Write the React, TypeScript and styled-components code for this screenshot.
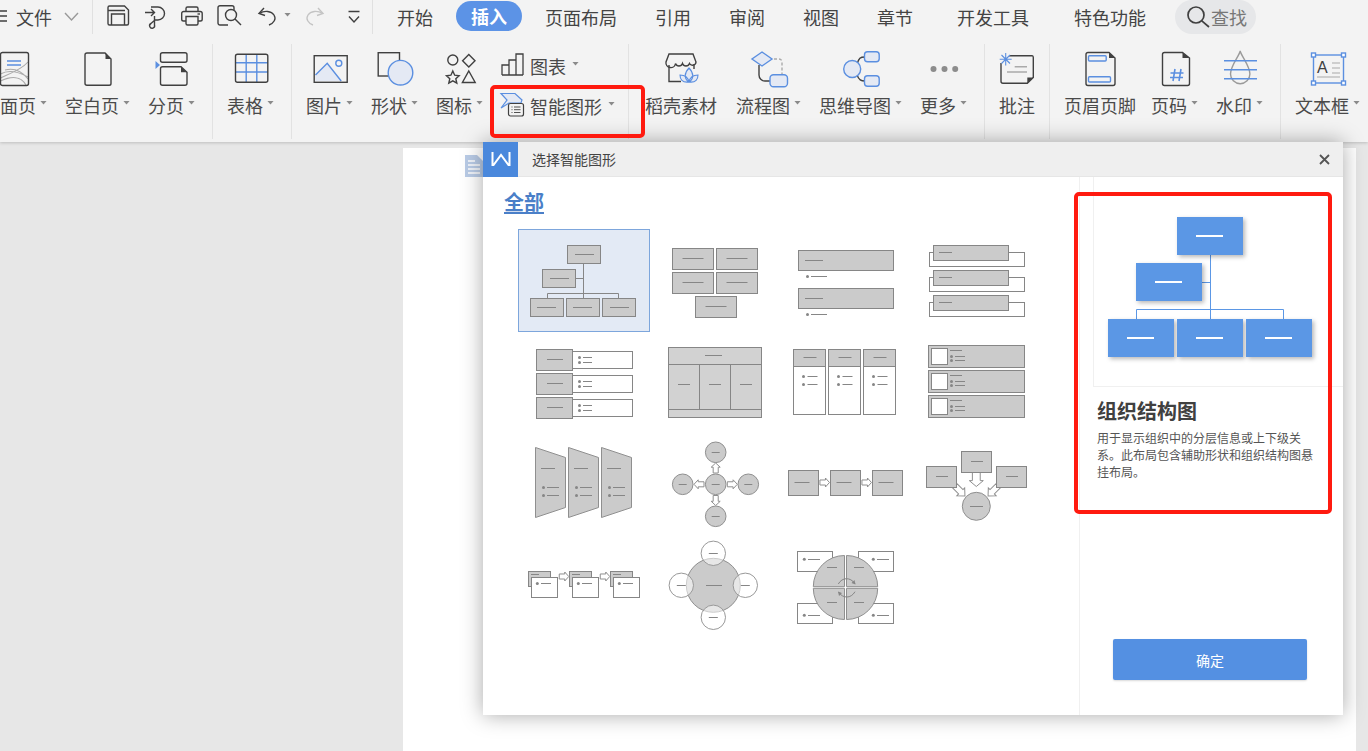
import React from "react";
import styled, { createGlobalStyle } from "styled-components";

const INK = "#404040";
const BLUE = "#5b8fe0";
const TINT = "#e4e9f4";
const GRAY = "#868686";
const FILL = "#cbcbcb";

const GlobalStyle = createGlobalStyle`
  html, body {
    margin: 0;
    padding: 0;
    overflow: hidden;
    background: #e7e7e7;
    font-family: "Noto Sans CJK SC", "Liberation Sans", sans-serif;
  }
`;

const Page = styled.div`
  position: relative;
  width: 1368px;
  height: 751px;
  overflow: hidden;
  background: #e7e7e7;
`;

const Ribbon = styled.header`
  height: 142px;
  background: #f3f3f3;
  box-shadow: 0 1px 3px rgba(0, 0, 0, 0.18);
  overflow: hidden;
`;

const QuickBar = styled.div`
  display: flex;
  align-items: center;
  height: 34px;
  color: #444;
  font-size: 18px;
`;

const QuickSlot = styled.span<{ $ml?: number; $w?: number }>`
  display: inline-flex;
  flex: none;
  width: ${(p) => p.$w ?? 24}px;
  margin-left: ${(p) => p.$ml ?? 13}px;
`;

const FileLabel = styled.span`
  margin-left: 9px;
  line-height: 24px;
`;

const BarSep = styled.span<{ $ml: number }>`
  flex: none;
  width: 1px;
  height: 34px;
  margin-left: ${(p) => p.$ml}px;
  background: #e0e0e0;
`;

const Tab = styled.span<{ $push?: number; $active?: boolean }>`
  flex: none;
  margin-left: ${(p) => p.$push ?? 8}px;
  padding: 0 15px;
  height: ${(p) => (p.$active ? 30 : 34)}px;
  line-height: ${(p) => (p.$active ? 30 : 34)}px;
  align-self: flex-start;
  margin-top: ${(p) => (p.$active ? 1 : 0)}px;
  border-radius: 15px;
  background: ${(p) => (p.$active ? "#5c93e6" : "transparent")};
  color: ${(p) => (p.$active ? "#fff" : "#444")};
  font-weight: ${(p) => (p.$active ? 700 : 400)};
`;

const SearchPill = styled.span`
  display: flex;
  flex: none;
  align-items: center;
  gap: 1px;
  width: 81px;
  height: 34px;
  margin-left: 14px;
  padding-left: 11px;
  box-sizing: border-box;
  border-radius: 17px;
  background: #e6e7e9;
  color: #777;
`;

const ToolRow = styled.div`
  display: flex;
  height: 95px;
  margin-top: 10px;
  margin-left: -18px;
`;

const Group = styled.div<{ $pl?: number; $pr?: number; $last?: boolean }>`
  display: flex;
  flex: none;
  gap: 18px;
  padding: 0 ${(p) => p.$pr ?? 17}px 0 ${(p) => p.$pl ?? 14}px;
  border-right: ${(p) => (p.$last ? "none" : "1px solid #e2e2e2")};
`;

const ToolButton = styled.div<{ $mr?: number }>`
  display: flex;
  flex: none;
  flex-direction: column;
  align-items: center;
  padding-top: 6px;
  margin-right: ${(p) => p.$mr ?? 0}px;
`;

const IconSvg = styled.svg`
  display: block;
  flex: none;
  width: 36px;
  height: 36px;
  margin-bottom: 8px;
  overflow: visible;
`;

const ToolLabel = styled.div`
  display: flex;
  align-items: center;
  height: 22px;
  color: #4a4a4a;
  font-size: 18px;
  line-height: 22px;
  white-space: nowrap;
`;

const Caret = styled.i<{ $ml?: number }>`
  flex: none;
  width: 7px;
  height: 4px;
  margin-left: ${(p) => p.$ml ?? 4}px;
  margin-bottom: 5px;
  background: #8a8a8a;
  clip-path: polygon(0 0, 100% 0, 50% 100%);
`;

const SmallColumn = styled.div`
  display: flex;
  flex-direction: column;
  gap: 16px;
  padding-top: 10px;
`;

const SmallTool = styled.div`
  display: flex;
  align-items: center;
  gap: 5px;
  height: 24px;
  color: #4a4a4a;
  font-size: 18px;
`;

const SmallIcon = styled.svg`
  flex: none;
  width: 24px;
  height: 24px;
  overflow: visible;
`;

const Workspace = styled.main`
  padding: 6px 0 0 403px;
`;

const DocSheet = styled.section`
  width: 953px;
  height: 603px;
  padding: 7px 0 0 62px;
  box-sizing: border-box;
  background: #fff;
`;

const Dialog = styled.div`
  position: absolute;
  left: 483px;
  top: 142px;
  display: flex;
  flex-direction: column;
  width: 860px;
  height: 573px;
  background: #fff;
  box-shadow: 0 0 20px rgba(0, 0, 0, 0.34);
`;

const TitleBar = styled.div`
  display: flex;
  flex: none;
  align-items: center;
  height: 35px;
  box-sizing: border-box;
  border-bottom: 1px solid #e6e6e6;
  background: #efefef;
  color: #444;
  font-size: 14px;
`;

const LogoTile = styled.div`
  display: flex;
  flex: none;
  align-items: center;
  justify-content: center;
  width: 35px;
  height: 35px;
  margin-right: 14px;
  background: #4a88dc;
`;

const CloseSlot = styled.span`
  display: flex;
  margin-left: auto;
  margin-right: 13px;
`;

const DialogBody = styled.div`
  display: flex;
  flex: 1;
  min-height: 0;
`;

const Gallery = styled.div`
  flex: none;
  width: 597px;
  padding: 14px 0 0 21px;
  box-sizing: border-box;
  border-right: 1px solid #f0f0f0;
`;

const AllHeading = styled.span`
  display: block;
  width: fit-content;
  height: 21px;
  border-bottom: 2px solid #4a7fc8;
  color: #4a7fc8;
  font-size: 20px;
  font-weight: 700;
  line-height: 21px;
`;

const TileGrid = styled.div`
  display: grid;
  grid-template-columns: repeat(4, 132px);
  grid-auto-rows: 102px;
  margin: 15px 0 0 14px;
`;

const Tile = styled.div<{ $selected?: boolean }>`
  height: 103px;
  background: ${(p) => (p.$selected ? "#e3eaf5" : "transparent")};
  outline: ${(p) => (p.$selected ? "1px solid #7da6dc" : "none")};
  outline-offset: -1px;
`;

const TileSvg = styled.svg`
  display: block;
  width: 132px;
  height: 103px;
`;

const Detail = styled.aside`
  display: flex;
  flex: 1;
  flex-direction: column;
  padding: 0 0 35px 13px;
`;

const Preview = styled.svg`
  display: block;
  flex: none;
  width: 250px;
  height: 210px;
  box-sizing: border-box;
  border-left: 1px solid #f0f0f0;
  border-bottom: 1px solid #f0f0f0;
`;

const LayoutName = styled.h2`
  margin: 10px 0 0 4px;
  color: #404040;
  font-size: 20px;
  font-weight: 700;
  line-height: 28px;
`;

const LayoutText = styled.p`
  width: 218px;
  margin: 4px 0 0 4px;
  color: #555;
  font-size: 12px;
  line-height: 17px;
`;

const ConfirmButton = styled.button`
  width: 194px;
  height: 41px;
  margin: auto 0 0 20px;
  border: none;
  border-radius: 2px;
  background: #5490e2;
  box-shadow: 0 1px 2px rgba(0, 0, 0, 0.15);
  color: #fff;
  font-family: inherit;
  font-size: 14px;
`;

const RedMark = styled.div<{ $x: number; $y: number; $w: number; $h: number }>`
  position: absolute;
  left: ${(p) => p.$x}px;
  top: ${(p) => p.$y}px;
  width: ${(p) => p.$w}px;
  height: ${(p) => p.$h}px;
  box-sizing: border-box;
  border: 4px solid #ff1a0f;
  border-radius: 5px;
  pointer-events: none;
`;

/* ---- quick access icons ---- */

const Quick = ({ children }: { children: React.ReactNode }) => (
  <svg width="24" height="24" viewBox="0 0 24 24" fill="none" stroke={INK} strokeWidth="1.4" style={{ overflow: "visible" }}>
    {children}
  </svg>
);

const SaveIcon = () => (
  <Quick>
    <path d="M3.500 1h15l4 4v13.500a1.500 1.500 0 0 1-1.500 1.500H3.500A1.500 1.500 0 0 1 2 18.500v-16A1.500 1.500 0 0 1 3.500 1z" />
    <path d="M2 5.500h17M5.500 20V9h13v11" />
  </Quick>
);
const SaveAsIcon = () => (
  <Quick>
    <path d="M2 7.500h9M8 4l3.500 3.500L8 11" />
    <path d="M8 2h7a6.500 6.500 0 0 1 0 13h-3l-4 3.500a2.500 2.500 0 1 0 3.500 1.500V11" />
  </Quick>
);
const PrintIcon = () => (
  <Quick>
    <path d="M6 6.500V3.500A1.500 1.500 0 0 1 7.500 2h9A1.500 1.500 0 0 1 18 3.500v3" />
    <path d="M6 16H3.500a1.800 1.800 0 0 1-1.800-1.800V8.500a2 2 0 0 1 2-2h16.500a2 2 0 0 1 2 2v5.700a1.800 1.800 0 0 1-1.800 1.800H18" />
    <path d="M6 11.500h12v7a1.500 1.500 0 0 1-1.500 1.500h-9A1.500 1.500 0 0 1 6 18.500z" />
    <path d="M17.500 9H20" />
  </Quick>
);
const PreviewIcon = () => (
  <Quick>
    <path d="M11 20H3a2 2 0 0 1-2-2V2.700a2 2 0 0 1 2-2h12a2 2 0 0 1 2 2V5" />
    <circle cx="14" cy="10" r="5.500" />
    <path d="M18 14l6 6" />
  </Quick>
);
const UndoIcon = () => (
  <Quick>
    <path d="M9 3L4 8.500l6 2" />
    <path d="M4.500 8.500c5-3.500 12-2.500 14.500 1.500 2.500 4 0 8-5 10" />
  </Quick>
);
const RedoIcon = () => (
  <svg width="24" height="24" viewBox="0 0 24 24" fill="none" stroke="#c4c4c4" strokeWidth="1.4">
    <path d="M15 3l5 5.500-6 2" />
    <path d="M19.500 8.500c-5-3.500-12-2.500-14.500 1.500-2.500 4 0 8 5 10" />
  </svg>
);
const MoreQuickIcon = () => (
  <Quick>
    <path d="M6.500 6.500h11M7 11.500l5 5.500 5-5.500" />
  </Quick>
);
const SearchIcon = () => (
  <svg width="24" height="24" viewBox="0 0 24 24" fill="none" stroke={INK} strokeWidth="1.7">
    <circle cx="10" cy="10" r="8" />
    <path d="M15.800 15.800L23 22" />
  </svg>
);

/* ---- ribbon icons ---- */

const Ico = ({ children }: { children: React.ReactNode }) => (
  <IconSvg viewBox="0 0 36 36" fill="none" stroke={INK} strokeWidth="1.4">
    {children}
  </IconSvg>
);
const PAGE = "M7 3h18l6 6v24.500a1.800 1.800 0 0 1-1.800 1.800H7a2 2 0 0 1-2-2V5a2 2 0 0 1 2-2z";
const Corner = () => <path d="M25.500 3l5.500 6h-5.500z" fill={INK} stroke="none" />;

const CoverIcon = () => (
  <IconSvg viewBox="0 0 36 36" fill="none" strokeWidth="1.4">
    <path d="M3.500 24C12 19 22 22 31 27M3.500 28C12 24 24 20 31 12M3.500 31C14 26 24 26 29 35M8 20c8-2 16 0 23 9" stroke="#aaa" strokeWidth="1.100" />
    <path d="M10 11h14M10 15h14" stroke={BLUE} />
    <path d="M5.500 2.500h24a2 2 0 0 1 2 2v29a2 2 0 0 1-2 2h-24a2 2 0 0 1-2-2v-29a2 2 0 0 1 2-2z" stroke={INK} />
  </IconSvg>
);
const BlankIcon = () => (
  <Ico>
    <path d={PAGE} />
    <Corner />
  </Ico>
);
const BreakIcon = () => (
  <IconSvg viewBox="0 0 36 36" fill="none" stroke={INK} strokeWidth="1.4">
    <rect x="6.500" y="2.700" width="26.500" height="9.500" rx="2" />
    <path d="M8.500 16.700H27l6 5.500v11a2 2 0 0 1-2 2H8.500a2 2 0 0 1-2-2v-14.500a2 2 0 0 1 2-2z" />
    <path d="M27 16.700l6 5.500h-6z" fill={INK} stroke="none" />
    <path d="M1.500 11l4.500 4-4.500 4z" fill={BLUE} stroke="none" />
  </IconSvg>
);
const TableIcon = () => (
  <Ico>
    <path d="M2.500 12.700h32.300M2.500 22h32.300M13.200 4.300v28M23.800 4.300v28" stroke={BLUE} />
    <rect x="2.500" y="4.300" width="32.300" height="28" rx="2" />
  </Ico>
);
const PictureIcon = () => (
  <Ico>
    <path d="M3.500 25l11.700-11.700 14 17.700H3.500z" fill={TINT} stroke="none" />
    <path d="M3.500 25l11.700-11.700 14 17.700M23.800 13.300a3 3 0 1 0 6 0 3 3 0 1 0-6 0z" stroke={BLUE} />
    <rect x="2.200" y="5.700" width="33" height="26.600" />
  </Ico>
);
const ShapeIcon = () => (
  <Ico>
    <rect x="1.200" y="2.700" width="21.300" height="23.300" />
    <circle cx="23.500" cy="22.700" r="12.300" fill={TINT} stroke={BLUE} />
  </Ico>
);
const SymbolIcon = () => (
  <Ico>
    <circle cx="10.800" cy="10" r="5" />
    <path d="M10.800 21l1.900 4.200 4.400.500-3.300 3 1 4.500-4-2.300-4 2.300 1-4.500-3.300-3 4.400-.500z" />
    <path d="M26.800 4.500l6.200 6.200-6.200 6.200-6.200-6.200z" />
    <path d="M26.800 21l6.400 11.500H20.400z" />
  </Ico>
);
const StoreIcon = () => (
  <Ico>
    <path d="M6 4h24l3 8a3.500 3.500 0 0 1-6.500 1.500 3.700 3.700 0 0 1-7 0 3.700 3.700 0 0 1-7 0A3.500 3.500 0 0 1 3 12z" />
    <path d="M6 15v16.500h12M31 14v5" />
    <path d="M26 32c-5-3-5-9 0-14 5 5 5 11 0 14zM26 32c-7 1-9-3-9-7 4 0 8 2 9 7zM26 32c7 1 9-3 9-7-4 0-8 2-9 7z" fill={TINT} stroke={BLUE} strokeWidth="1.100" />
  </Ico>
);
const FlowIcon = () => (
  <Ico>
    <path d="M18 9h10a3 3 0 0 1 3 3v12" stroke="#aaa" strokeDasharray="3 2" />
    <path d="M8 15v10a6 6 0 0 0 6 6h5" />
    <path d="M11 2l10 7-10 7L1 9z" fill={TINT} stroke={BLUE} />
    <rect x="19" y="24.700" width="17.500" height="12" rx="3.500" fill={TINT} stroke={BLUE} />
  </Ico>
);
const MindIcon = () => (
  <Ico>
    <path d="M14 14c2-6 3-7 8-7M14 25c2 5 4 6 8 6" />
    <circle cx="9.200" cy="19" r="8.500" fill={TINT} stroke={BLUE} />
    <rect x="21.500" y="1.700" width="14.700" height="10" rx="3" fill={TINT} stroke={BLUE} />
    <rect x="21.500" y="25.700" width="14.700" height="10.600" rx="3" fill={TINT} stroke={BLUE} />
  </Ico>
);
const DotsIcon = () => (
  <IconSvg viewBox="0 0 36 36" fill="#8c8c8c">
    <circle cx="7.500" cy="19" r="3" />
    <circle cx="18.500" cy="19" r="3" />
    <circle cx="29.200" cy="19" r="3" />
  </IconSvg>
);
const NoteIcon = () => (
  <Ico>
    <path d="M10 5.700h23a1.800 1.800 0 0 1 1.300 1.800v20l-6 5.800H4a2 2 0 0 1-2-2V13" />
    <path d="M34.300 27.500l-6 5.800v-5.800z" fill={INK} stroke="none" />
    <path d="M15.700 16.700H28M8 22h20" stroke="#aaa" />
    <path d="M6.700 3v12.500M.7 9.300h12M2.500 5l8.500 8.500M11 5l-8.500 8.500" stroke={BLUE} strokeWidth="1.100" />
  </Ico>
);
const HeaderIcon = () => (
  <Ico>
    <path d="M6 2.500h21l6 5.500v25.500a2 2 0 0 1-2 2H6a2 2 0 0 1-2-2V4.500a2 2 0 0 1 2-2z" />
    <path d="M27 2.500l6 5.500h-6z" fill={INK} stroke="none" />
    <rect x="6.500" y="5.700" width="17.700" height="5.300" rx="1" stroke={BLUE} />
    <rect x="6.500" y="26.700" width="22" height="5.300" rx="1" stroke={BLUE} />
  </Ico>
);
const PageNumIcon = () => (
  <Ico>
    <path d="M7.500 2.500h18l7 5.500v25.500a2 2 0 0 1-2 2h-23a2 2 0 0 1-2-2V4.500a2 2 0 0 1 2-2z" />
    <path d="M25.500 2.500l7 5.500h-7z" fill={INK} stroke="none" />
    <path d="M18 19l-2 12M24 19l-2 12M13.500 23h13M13 27.500h13" stroke={BLUE} strokeWidth="1.600" />
  </Ico>
);
const WatermarkIcon = () => (
  <Ico>
    <path d="M18.200 1c-1 5-9.700 15-9.700 23a9.700 9.700 0 0 0 19.400 0c0-8-8.700-18-9.700-23z" stroke="#9a9a9a" />
    <path d="M2 10.700h33M2 19.700h33M2 28.700h33" stroke={BLUE} />
  </Ico>
);
const TextBoxIcon = () => (
  <Ico>
    <rect x="3.500" y="5" width="30" height="28" stroke={BLUE} />
    <text x="7" y="23" fontSize="16" fill={INK} stroke="none" fontFamily="Liberation Sans, sans-serif">A</text>
    <path d="M22 13h8M22 18h8M22 23h8M7 27h23" stroke="#aaa" strokeWidth="1.100" />
    {[[3.5, 5], [33.5, 5], [3.5, 33], [33.5, 33]].map(([x, y]) => (
      <rect key={`${x}-${y}`} x={x - 2} y={y - 2} width="4" height="4" fill="#fff" stroke={BLUE} />
    ))}
  </Ico>
);

const ChartIcon = () => (
  <SmallIcon viewBox="0 0 24 24" fill="none" stroke={INK} strokeWidth="1.300">
    <path d="M1 21V11h7v10M8 21V6h7v15M15 21V0h7v21M1 21h21" />
  </SmallIcon>
);
const SmartIcon = () => (
  <SmallIcon viewBox="0 0 24 24" fill="none" strokeWidth="1.200">
    <path d="M0 -.5h14l7 6.500-1 3H8l-8 5 6-8z" fill={TINT} stroke={BLUE} />
    <rect x="7.500" y="9.500" width="15" height="12.500" rx="2" fill="#f3f3f3" stroke={INK} />
    <path d="M10.500 13h1M13 13h6.500M10.500 15.700h1M13 15.700h6.500M10.500 18.500h1M13 18.500h6.500" stroke={INK} strokeWidth=".9" />
  </SmallIcon>
);

const DocMark = () => (
  <svg width="22" height="22" viewBox="0 0 22 22" style={{ display: "block" }}>
    <path d="M0 0h12l6 6v16H0z" fill="#b9cbe6" />
    <path d="M3 6h7M3 10h12M3 14h12M3 18h12" stroke="#fff" strokeWidth="1.300" />
  </svg>
);

/* ---- gallery pieces, drawn in screenshot coordinates ---- */

const Box = ({ x, y, w, h, white, fill }: { x: number; y: number; w: number; h: number; white?: boolean; fill?: string }) => (
  <rect x={x} y={y} width={w} height={h} fill={white ? "#fff" : fill ?? FILL} stroke={GRAY} />
);
const Dash = ({ x1, x2, y }: { x1: number; x2: number; y: number }) => (
  <line x1={x1} x2={x2} y1={y} y2={y} stroke={GRAY} />
);
const Dot = ({ x, y }: { x: number; y: number }) => <circle cx={x} cy={y} r="1.500" fill={GRAY} />;
const Wire = ({ d }: { d: string }) => <path d={d} fill="none" stroke={GRAY} />;
const Disc = ({ x, y, r }: { x: number; y: number; r: number }) => (
  <circle cx={x} cy={y} r={r} fill={FILL} stroke="#8f8f8f" />
);
const Arrow = ({ x, y, len = 10, w = 9, rot = 0 }: { x: number; y: number; len?: number; w?: number; rot?: number }) => {
  const head = len * 0.42;
  const s = w * 0.28;
  const pts = [
    [-len / 2, -s], [len / 2 - head, -s], [len / 2 - head, -w / 2], [len / 2, 0],
    [len / 2 - head, w / 2], [len / 2 - head, s], [-len / 2, s],
  ].map((p) => p.join(",")).join(" ");
  return <polygon points={pts} transform={`translate(${x} ${y}) rotate(${rot})`} fill="#fff" stroke="#8f8f8f" />;
};

const orgChart = (
  <>
    <Wire d="M583.500 263v35M575.500 278.500h8M547.500 298v-4.500h71v4.500" />
    <Box x={567.5} y={245.5} w={33} h={18} /><Dash x1={575} x2={594} y={254.5} />
    <Box x={542.5} y={269.5} w={33} h={18} /><Dash x1={550} x2={569} y={278.5} />
    <Box x={530.5} y={298.5} w={33} h={18} /><Dash x1={537} x2={556} y={307.5} />
    <Box x={566.5} y={298.5} w={33} h={18} /><Dash x1={573} x2={592} y={307.5} />
    <Box x={602.5} y={298.5} w={33} h={18} /><Dash x1={610} x2={629} y={307.5} />
  </>
);

const blockGrid = (
  <>
    {[[672.5, 248.5], [716.5, 248.5], [672.5, 272.5], [716.5, 272.5], [695.5, 296.5]].map(([x, y]) => (
      <g key={`${x}-${y}`}>
        <Box x={x} y={y} w={41} h={21} />
        <Dash x1={x + 10} x2={x + 31} y={y + 10} />
      </g>
    ))}
  </>
);

const stackedList = (
  <>
    {[250.5, 288.5].map((y) => (
      <g key={y}>
        <Box x={798.5} y={y} w={95} h={20} />
        <Dash x1={805} x2={823} y={y + 10} />
        <Dot x={807.5} y={y + 26} />
        <Dash x1={811} x2={827} y={y + 26} />
      </g>
    ))}
  </>
);

const tabbedList = (
  <>
    {[245.5, 270.5, 295.5].map((y) => (
      <g key={y}>
        <Box x={929.5} y={y + 7} w={95} h={14} white />
        <Box x={933.5} y={y} w={75} h={15} />
        <Dash x1={939} x2={952} y={y + 7} />
      </g>
    ))}
  </>
);

const sideList = (
  <>
    {[349.5, 373.5, 397.5].map((y) => (
      <g key={y}>
        <Box x={572.5} y={y + 2} w={60} h={17} white />
        <Box x={536.5} y={y} w={36} h={21} />
        <Dash x1={547} x2={563} y={y + 10} />
        <Dot x={579.5} y={y + 8} />
        <Dash x1={583} x2={592} y={y + 8} />
        <Dot x={579.5} y={y + 13} />
        <Dash x1={583} x2={592} y={y + 13} />
      </g>
    ))}
  </>
);

const tableBlock = (
  <>
    <Box x={668.5} y={347.5} w={93} h={70} fill="#d2d2d2" />
    <Wire d="M668.500 364.500h93M668.500 409.500h93M699.500 364.500v45M730.500 364.500v45" />
    <Dash x1={705} x2={722} y={355.5} />
    <Dash x1={678} x2={690} y={384.5} />
    <Dash x1={709} x2={721} y={384.5} />
    <Dash x1={740} x2={752} y={384.5} />
  </>
);

const columnList = (
  <>
    {[793.5, 828.5, 863.5].map((x) => (
      <g key={x}>
        <Box x={x} y={349.5} w={32} h={65} white />
        <Box x={x} y={349.5} w={32} h={17} />
        <Dash x1={x + 10} x2={x + 23} y={357.5} />
        <Dot x={x + 10} y={376.5} />
        <Dash x1={x + 14} x2={x + 24} y={376.5} />
        <Dot x={x + 10} y={384.5} />
        <Dash x1={x + 14} x2={x + 24} y={384.5} />
      </g>
    ))}
  </>
);

const pictureList = (
  <>
    {[345.5, 370.5, 395.5].map((y) => (
      <g key={y}>
        <Box x={928.5} y={y} w={96} h={22} />
        <Box x={931.5} y={y + 3} w={16} h={16} white />
        <Dash x1={950} x2={962} y={y + 5} />
        <Dot x={951.5} y={y + 11} />
        <Dash x1={955} x2={965} y={y + 11} />
        <Dot x={951.5} y={y + 15} />
        <Dash x1={955} x2={965} y={y + 15} />
      </g>
    ))}
  </>
);

const funnelList = (
  <>
    {[0, 33, 66].map((o) => (
      <g key={o}>
        <polygon points={`${535.5 + o},447.5 ${565.5 + o},457.5 ${565.5 + o},507.5 ${535.5 + o},517.5`} fill={FILL} stroke="#8f8f8f" />
        <Dash x1={541 + o} x2={555 + o} y={468.5} />
        <Dot x={543.5 + o} y={487.5} />
        <Dash x1={547 + o} x2={559 + o} y={487.5} />
        <Dot x={543.5 + o} y={495.5} />
        <Dash x1={547 + o} x2={559 + o} y={495.5} />
      </g>
    ))}
  </>
);

const crossCycle = (
  <>
    {[[715.7, 484.3], [715.7, 452.3], [715.7, 516.3], [682.7, 484.3], [748.3, 484.3]].map(([x, y]) => (
      <g key={`${x}-${y}`}>
        <Disc x={x} y={y} r={10.3} />
        <Dash x1={x - 4} x2={x + 4} y={Math.round(y) + 0.5} />
      </g>
    ))}
    <Arrow x={715.7} y={468} rot={-90} />
    <Arrow x={715.7} y={500.5} rot={90} />
    <Arrow x={699} y={484.3} rot={180} />
    <Arrow x={732.3} y={484.3} />
  </>
);

const rowFlow = (
  <>
    {[788.5, 830.5, 872.5].map((x) => (
      <g key={x}>
        <Box x={x} y={470.5} w={30} h={25} />
        <Dash x1={x + 6} x2={x + 21} y={482.5} />
      </g>
    ))}
    <Arrow x={824.7} y={482.5} len={9.5} />
    <Arrow x={866.7} y={482.5} len={9.5} />
  </>
);

const converge = (
  <>
    <Arrow x={976.3} y={479.5} len={14} w={14} rot={90} />
    <Arrow x={960} y={491} len={14} w={11} rot={45} />
    <Arrow x={993} y={491} len={14} w={11} rot={135} />
    <Box x={961.5} y={451.5} w={30} h={21} /><Dash x1={971} x2={983} y={461.5} />
    <Box x={926.5} y={466.5} w={30} h={21} /><Dash x1={936} x2={948} y={476.5} />
    <Box x={996.5} y={466.5} w={30} h={21} /><Dash x1={1006} x2={1018} y={476.5} />
    <Disc x={976.3} y={506.3} r={14} /><Dash x1={970} x2={983} y={506.5} />
  </>
);

const cardFlow = (
  <>
    {[0, 41, 82].map((o) => (
      <g key={o}>
        <Box x={528.5 + o} y={571.5} w={22} h={15} />
        <Dash x1={531 + o} x2={539 + o} y={574.5} />
        <Box x={531.5 + o} y={577.5} w={26} h={20} white />
        <Dot x={537.3 + o} y={583.5} />
        <Dash x1={541 + o} x2={551 + o} y={583.5} />
      </g>
    ))}
    <Arrow x={564} y={576.5} len={9.5} />
    <Arrow x={605} y={576.5} len={9.5} />
  </>
);

const hubRing = (
  <>
    <Disc x={713.3} y={585.3} r={27} />
    <Dash x1={706} x2={722} y={585.5} />
    {[[713.3, 553.3], [713.3, 617.3], [681.3, 585.3], [745.3, 585.3]].map(([x, y]) => (
      <g key={`${x}-${y}`}>
        <circle cx={x} cy={y} r="12.200" fill="rgba(255,255,255,.55)" stroke="#999" />
        <Dash x1={x - 4.5} x2={x + 4.5} y={Math.round(y) + 0.5} />
      </g>
    ))}
  </>
);

const pieCycle = (
  <>
    {[[797.5, 551.5], [858.5, 551.5], [797.5, 603.5], [858.5, 603.5]].map(([x, y]) => (
      <Box key={`${x}-${y}`} x={x} y={y} w={35} h={20} white />
    ))}
    <Dot x={804.3} y={559.3} /><Dash x1={808} x2={820} y={559.5} />
    <Dot x={873.3} y={559.3} /><Dash x1={877} x2={889} y={559.5} />
    <Dot x={804.3} y={615.3} /><Dash x1={808} x2={820} y={615.5} />
    <Dot x={873.3} y={615.3} /><Dash x1={877} x2={889} y={615.5} />
    <g fill={FILL} stroke="#8f8f8f">
      <path d="M844.500 555.500A31.200 31.200 0 0 0 813.300 586.700H844.500z" />
      <path d="M846.500 555.500A31.200 31.200 0 0 1 877.700 586.700H846.500z" />
      <path d="M844.500 619.500A31.200 31.200 0 0 1 813.300 588.300H844.500z" />
      <path d="M846.500 619.500A31.200 31.200 0 0 0 877.700 588.300H846.500z" />
    </g>
    <Dash x1={827} x2={837} y={567.5} />
    <Dash x1={854} x2={864} y={567.5} />
    <Dash x1={827} x2={837} y={602.5} />
    <Dash x1={854} x2={864} y={602.5} />
    <Wire d="M838.300 584c4-7 12-7 16.500-.5M855 591.700c-4 7-12 7-16.500.5" />
    <path d="M855.500 584.500l-4-1.500 3-3zM838 591.500l4 1.500-3 3z" fill={GRAY} />
  </>
);

const TILES = [
  orgChart, blockGrid, stackedList, tabbedList,
  sideList, tableBlock, columnList, pictureList,
  funnelList, crossCycle, rowFlow, converge,
  cardFlow, hubRing, pieCycle,
];

const PBLUE = "#5b97e5";
const PreviewBox = ({ x, y }: { x: number; y: number }) => (
  <g>
    <rect x={x} y={y} width="66" height="38" fill={PBLUE} style={{ filter: "drop-shadow(2px 2px 2px rgba(0,0,0,.28))" }} />
    <rect x={x + 19} y={y + 18} width="27" height="2" fill="#fff" />
  </g>
);

const ToolItem = ({ icon, label, caret = true, mr }: { icon: React.ReactNode; label: string; caret?: boolean; mr?: number }) => (
  <ToolButton $mr={mr}>
    {icon}
    <ToolLabel>
      {label}
      {caret && <Caret />}
    </ToolLabel>
  </ToolButton>
);

const App = () => {
  return (
    <Page>
      <GlobalStyle />
      <Ribbon>
        <QuickBar>
          <QuickSlot $ml={0} $w={7}>
            <svg width="7" height="24" viewBox="0 0 7 24" stroke={INK} strokeWidth="1.400">
              <path d="M0 6h7M0 11h7M0 16h7" />
            </svg>
          </QuickSlot>
          <FileLabel>文件</FileLabel>
          <QuickSlot $ml={12} $w={15}>
            <svg width="15" height="24" viewBox="0 0 15 24" fill="none" stroke="#999" strokeWidth="1.400">
              <path d="M1 8l6.500 7L14 8" />
            </svg>
          </QuickSlot>
          <BarSep $ml={13} />
          <QuickSlot><SaveIcon /></QuickSlot>
          <QuickSlot><SaveAsIcon /></QuickSlot>
          <QuickSlot><PrintIcon /></QuickSlot>
          <QuickSlot><PreviewIcon /></QuickSlot>
          <QuickSlot $ml={14}><UndoIcon /></QuickSlot>
          <Caret $ml={5} />
          <QuickSlot $ml={12}><RedoIcon /></QuickSlot>
          <QuickSlot $ml={15}><MoreQuickIcon /></QuickSlot>
          <BarSep $ml={6} />
          <Tab $push={9}>开始</Tab>
          <Tab $active>插入</Tab>
          <Tab>页面布局</Tab>
          <Tab>引用</Tab>
          <Tab>审阅</Tab>
          <Tab>视图</Tab>
          <Tab>章节</Tab>
          <Tab $push={14}>开发工具</Tab>
          <Tab $push={15}>特色功能</Tab>
          <SearchPill>
            <SearchIcon />
            查找
          </SearchPill>
        </QuickBar>

        <ToolRow>
          <Group $pl={0}>
            <ToolItem icon={<CoverIcon />} label="封面页" />
            <ToolItem icon={<BlankIcon />} label="空白页" />
            <ToolItem icon={<BreakIcon />} label="分页" />
          </Group>
          <Group>
            <ToolItem icon={<TableIcon />} label="表格" />
          </Group>
          <Group $pr={13}>
            <ToolItem icon={<PictureIcon />} label="图片" />
            <ToolItem icon={<ShapeIcon />} label="形状" />
            <ToolItem icon={<SymbolIcon />} label="图标" />
            <SmallColumn>
              <SmallTool>
                <ChartIcon />
                图表
                <Caret $ml={1} />
              </SmallTool>
              <SmallTool>
                <SmartIcon />
                智能图形
                <Caret $ml={1} />
              </SmallTool>
            </SmallColumn>
          </Group>
          <Group $pl={16}>
            <ToolItem icon={<StoreIcon />} label="稻壳素材" caret={false} mr={1} />
            <ToolItem icon={<FlowIcon />} label="流程图" />
            <ToolItem icon={<MindIcon />} label="思维导图" />
            <ToolItem icon={<DotsIcon />} label="更多" />
          </Group>
          <Group $pr={14}>
            <ToolItem icon={<NoteIcon />} label="批注" caret={false} />
          </Group>
          <Group>
            <ToolItem icon={<HeaderIcon />} label="页眉页脚" caret={false} mr={-3} />
            <ToolItem icon={<PageNumIcon />} label="页码" />
            <ToolItem icon={<WatermarkIcon />} label="水印" />
          </Group>
          <Group $last>
            <ToolItem icon={<TextBoxIcon />} label="文本框" />
          </Group>
        </ToolRow>
      </Ribbon>

      <Workspace>
        <DocSheet>
          <DocMark />
        </DocSheet>
      </Workspace>

      <Dialog>
        <TitleBar>
          <LogoTile>
            <svg width="20" height="14" viewBox="0 0 20 14" fill="none" stroke="#fff" strokeWidth="2">
              <path d="M1.500 0v13h1L10 3l7.500 10h1V0" />
            </svg>
          </LogoTile>
          选择智能图形
          <CloseSlot>
            <svg width="11" height="11" viewBox="0 0 11 11" stroke="#555" strokeWidth="1.800">
              <path d="M1 1l9 9M10 1l-9 9" />
            </svg>
          </CloseSlot>
        </TitleBar>
        <DialogBody>
          <Gallery>
            <AllHeading>全部</AllHeading>
            <TileGrid>
              {TILES.map((art, i) => (
                <Tile key={i} $selected={i === 0}>
                  <TileSvg viewBox={`${518 + 132 * (i % 4)} ${229 + 102 * Math.floor(i / 4)} 132 103`}>{art}</TileSvg>
                </Tile>
              ))}
            </TileGrid>
          </Gallery>
          <Detail>
            <Preview viewBox="1094 177 249 209">
              <path d="M1210.500 255v64M1202 282.500h8.500M1136.500 319v-9.500h147v9.500" fill="none" stroke={PBLUE} />
              <PreviewBox x={1177} y={217} />
              <PreviewBox x={1136} y={263} />
              <PreviewBox x={1108} y={319} />
              <PreviewBox x={1177} y={319} />
              <PreviewBox x={1246} y={319} />
            </Preview>
            <LayoutName>组织结构图</LayoutName>
            <LayoutText>用于显示组织中的分层信息或上下级关系。此布局包含辅助形状和组织结构图悬挂布局。</LayoutText>
            <ConfirmButton>确定</ConfirmButton>
          </Detail>
        </DialogBody>
      </Dialog>

      <RedMark $x={490} $y={85} $w={155} $h={53} />
      <RedMark $x={1074} $y={192} $w={258} $h={322} />
    </Page>
  );
};

export default App;
